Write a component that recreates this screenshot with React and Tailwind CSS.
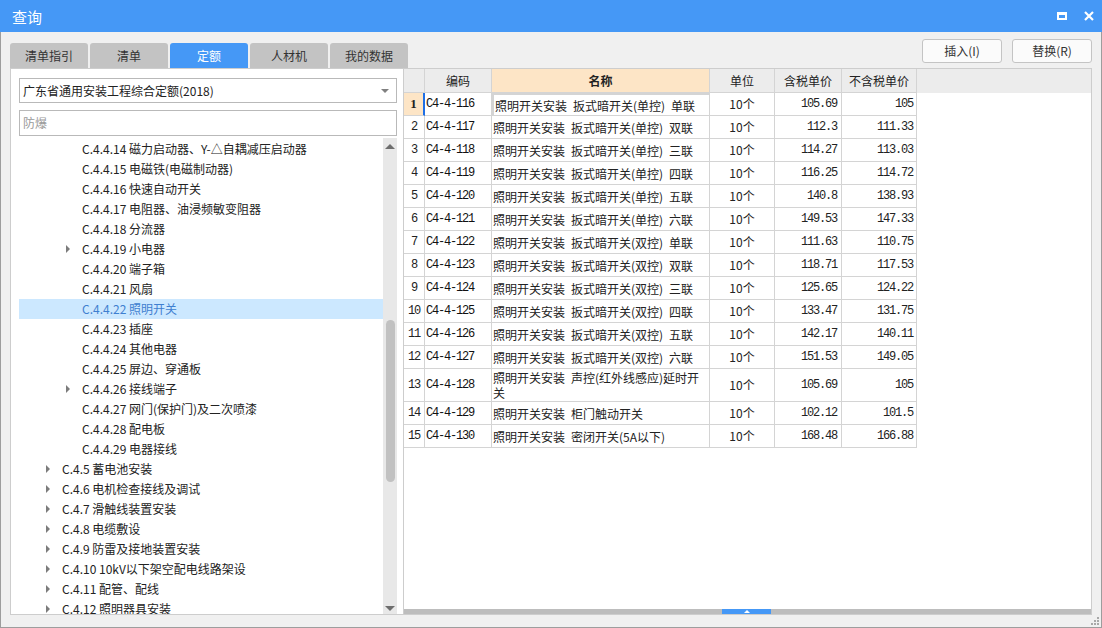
import { useState } from 'react'

const tree = [
  { lv: 3, t: 'C.4.4.14 磁力启动器、Y-△自耦减压启动器' },
  { lv: 3, t: 'C.4.4.15 电磁铁(电磁制动器)' },
  { lv: 3, t: 'C.4.4.16 快速自动开关' },
  { lv: 3, t: 'C.4.4.17 电阻器、油浸频敏变阻器' },
  { lv: 3, t: 'C.4.4.18 分流器' },
  { lv: 3, t: 'C.4.4.19 小电器', arrow: true },
  { lv: 3, t: 'C.4.4.20 端子箱' },
  { lv: 3, t: 'C.4.4.21 风扇' },
  { lv: 3, t: 'C.4.4.22 照明开关' },
  { lv: 3, t: 'C.4.4.23 插座' },
  { lv: 3, t: 'C.4.4.24 其他电器' },
  { lv: 3, t: 'C.4.4.25 屏边、穿通板' },
  { lv: 3, t: 'C.4.4.26 接线端子', arrow: true },
  { lv: 3, t: 'C.4.4.27 网门(保护门)及二次喷漆' },
  { lv: 3, t: 'C.4.4.28 配电板' },
  { lv: 3, t: 'C.4.4.29 电器接线' },
  { lv: 2, t: 'C.4.5 蓄电池安装', arrow: true },
  { lv: 2, t: 'C.4.6 电机检查接线及调试', arrow: true },
  { lv: 2, t: 'C.4.7 滑触线装置安装', arrow: true },
  { lv: 2, t: 'C.4.8 电缆敷设', arrow: true },
  { lv: 2, t: 'C.4.9 防雷及接地装置安装', arrow: true },
  { lv: 2, t: 'C.4.10 10kV以下架空配电线路架设', arrow: true },
  { lv: 2, t: 'C.4.11 配管、配线', arrow: true },
  { lv: 2, t: 'C.4.12 照明器具安装', arrow: true },
]

// en space (\u2002) keeps the wide gap the grid font shows
const P = '照明开关安装\u2002扳式暗开关'
const rows = [
  ['C4-4-116', [P + '(单控)\u2002单联'], '105.69', '105'],
  ['C4-4-117', [P + '(单控)\u2002双联'], '112.3', '111.33'],
  ['C4-4-118', [P + '(单控)\u2002三联'], '114.27', '113.03'],
  ['C4-4-119', [P + '(单控)\u2002四联'], '116.25', '114.72'],
  ['C4-4-120', [P + '(单控)\u2002五联'], '140.8', '138.93'],
  ['C4-4-121', [P + '(单控)\u2002六联'], '149.53', '147.33'],
  ['C4-4-122', [P + '(双控)\u2002单联'], '111.63', '110.75'],
  ['C4-4-123', [P + '(双控)\u2002双联'], '118.71', '117.53'],
  ['C4-4-124', [P + '(双控)\u2002三联'], '125.65', '124.22'],
  ['C4-4-125', [P + '(双控)\u2002四联'], '133.47', '131.75'],
  ['C4-4-126', [P + '(双控)\u2002五联'], '142.17', '140.11'],
  ['C4-4-127', [P + '(双控)\u2002六联'], '151.53', '149.05'],
  ['C4-4-128', ['照明开关安装\u2002声控(红外线感应)延时开', '关'], '105.69', '105'],
  ['C4-4-129', ['照明开关安装\u2002柜门触动开关'], '102.12', '101.5'],
  ['C4-4-130', ['照明开关安装\u2002密闭开关(5A以下)'], '168.48', '166.88'],
]

const tabs = ['清单指引', '清单', '定额', '人材机', '我的数据']

const cjk = "font-['Noto_Sans_CJK_SC',sans-serif]"
const mono = "font-['Liberation_Mono','Noto_Sans_CJK_SC',monospace] text-[12px] tracking-[-1.2px]"
const cell = 'border-r border-b border-[#d4d4d4] box-border flex items-center'

function Arrow() {
  return <span className="w-0 h-0 border-y-[4px] border-y-transparent border-l-[4px] border-l-[#7c7c7c]" />
}

export default function App() {
  const [tab, setTab] = useState(2)
  const [sel, setSel] = useState(8)

  return (
    <div className={`${cjk} w-[1102px] h-[628px] bg-[#f0f0f0] border-x border-b border-[#9d9d9d] flex flex-col text-[#222] relative`}>
      {/* title */}
      <div className="h-[32px] bg-[#4598f6] flex items-center justify-between pl-[12px] pr-[8px] -mx-px">
        <span className="text-white text-[15px] leading-none">查询</span>
        <div className="flex items-center gap-[17px]">
          <span className="w-[10px] h-[8px] border-2 border-t-[3px] border-white box-border" />
          <svg width="10" height="10" viewBox="0 0 10 10"><path d="M1 1L9 9M9 1L1 9" stroke="#fff" strokeWidth="2.2" /></svg>
        </div>
      </div>

      {/* tabs + buttons */}
      <div className="h-[36px] flex justify-between px-[9px]">
        <div className="flex items-end gap-[2px]">
          {tabs.map((t, i) => (
            <button key={t} onClick={() => setTab(i)}
              className={`w-[78px] h-[25px] rounded-t-[3px] text-[12px] leading-none ${i === tab ? 'bg-[#4598f6] text-white' : 'bg-[#c3c3c3] text-[#333]'}`}>
              {t}
            </button>
          ))}
        </div>
        <div className="flex gap-[10px] mt-[7px]">
          <button className="w-[80px] h-[24px] rounded-[3px] border border-[#c4c4c4] bg-[#fbfbfb] text-[12px] text-[#333]">插入(I)</button>
          <button className="w-[80px] h-[24px] rounded-[3px] border border-[#c4c4c4] bg-[#fbfbfb] text-[12px] text-[#333]">替换(R)</button>
        </div>
      </div>

      {/* main panel */}
      <div className="mx-[9px] h-[547px] border border-[#cdcdcd] bg-white flex">
        {/* left */}
        <div className="w-[392px] flex flex-col">
          <div className="ml-[8px] mt-[9px] w-[378px] h-[25px] border border-[#b9b9b9] flex items-center justify-between pl-[3px] pr-[7px]">
            <span className="text-[12px]">广东省通用安装工程综合定额(2018)</span>
            <span className="w-0 h-0 border-x-[4px] border-x-transparent border-t-[4px] border-t-[#808080]" />
          </div>
          <div className="ml-[8px] mt-[7px] w-[378px] h-[26px] border border-[#b9b9b9] flex items-center pl-[3px]">
            <span className="text-[12px] text-[#9a9a9a]">防爆</span>
          </div>
          <div className="ml-[8px] mt-[2px] w-[378px] flex-1 flex overflow-hidden">
            <div className="flex-1 pt-px overflow-hidden">
              {tree.map((n, i) => (
                <div key={n.t} onClick={() => setSel(i)}
                  className={`h-[20px] flex items-center text-[12px] leading-[20px] whitespace-nowrap ${i === sel ? 'bg-[#cce8ff] text-[#3f7fd0]' : ''}`}>
                  <span className={n.lv === 3 ? 'w-[39px]' : 'w-[19px]'} />
                  <span className="w-[20px] flex justify-center">{n.arrow && <Arrow />}</span>
                  <span className="ml-[4px]">{n.t}</span>
                </div>
              ))}
            </div>
            <div className="w-[14px] bg-[#e8e8e8] flex flex-col items-center">
              <span className="mt-[6px] w-0 h-0 border-x-[5px] border-x-transparent border-b-[5px] border-b-[#6e6e6e]" />
              <div className="mt-[171px] w-[9px] h-[162px] rounded-full bg-[#c1c1c1]" />
              <div className="flex-1" />
              <span className="mb-[3px] w-0 h-0 border-x-[5px] border-x-transparent border-t-[5px] border-t-[#6e6e6e]" />
            </div>
          </div>
        </div>

        {/* right */}
        <div className="flex-1 border-l border-[#cdcdcd] flex flex-col">
          <div className="flex-1 overflow-hidden">
            <div className="flex h-[24px] bg-[#ececec] text-[12px]">
              <div className={`${cell} w-[21px]`} />
              <div className={`${cell} w-[67px] justify-center`}>编码</div>
              <div className={`${cell} w-[218px] justify-center bg-[#fde5c6] font-bold`}>名称</div>
              <div className={`${cell} w-[65px] justify-center`}>单位</div>
              <div className={`${cell} w-[67px] justify-center`}>含税单价</div>
              <div className={`${cell} w-[75px] justify-center`}>不含税单价</div>
            </div>
            {rows.map((r, i) => {
              const h = r[1].length > 1 ? 'h-[33px]' : 'h-[23px]'
              const first = i === 0
              return (
                <div key={r[0]} className={`flex ${h}`}>
                  <div className={`${cell} w-[21px] justify-center ${first ? "bg-[#fde5c6] border-r-2 border-r-[#1e6fe6] font-['Liberation_Serif',serif] font-bold text-[13px]" : mono}`}>{i + 1}</div>
                  <div className={`${cell} w-[67px] pl-[1px] ${mono} text-[#111]`}>{r[0]}</div>
                  <div className={`${cell} w-[218px] pl-px text-[12px] leading-[15px] ${first ? 'border-2 border-[#1e6fe6]' : ''}`}>
                    <div className="whitespace-nowrap">{r[1].map((l, k) => <div key={k}>{l}</div>)}</div>
                  </div>
                  <div className={`${cell} w-[65px] justify-center text-[12px] leading-[15px] pb-px`}>10个</div>
                  <div className={`${cell} w-[67px] justify-end pr-[4px] ${mono}`}>{r[2]}</div>
                  <div className={`${cell} w-[75px] justify-end pr-[3px] ${mono}`}>{r[3]}</div>
                </div>
              )
            })}
          </div>
          <div className="h-[5px] bg-[#bdbdbd] flex">
            <div className="w-[318px]" />
            <div className="w-[49px] bg-[#4598f6] flex items-center justify-center">
              <span className="w-0 h-0 border-x-[3px] border-x-transparent border-b-[3px] border-b-white" />
            </div>
          </div>
        </div>
      </div>

      {/* resize grip */}
      <svg className="absolute right-[2px] bottom-[2px]" width="8" height="8" viewBox="0 0 8 8">
        <rect x="6" y="0" width="2" height="2" fill="#a8a8a8" />
        <rect x="3" y="3" width="2" height="2" fill="#a8a8a8" />
        <rect x="6" y="3" width="2" height="2" fill="#a8a8a8" />
        <rect x="0" y="6" width="2" height="2" fill="#a8a8a8" />
        <rect x="3" y="6" width="2" height="2" fill="#a8a8a8" />
        <rect x="6" y="6" width="2" height="2" fill="#a8a8a8" />
      </svg>
    </div>
  )
}
